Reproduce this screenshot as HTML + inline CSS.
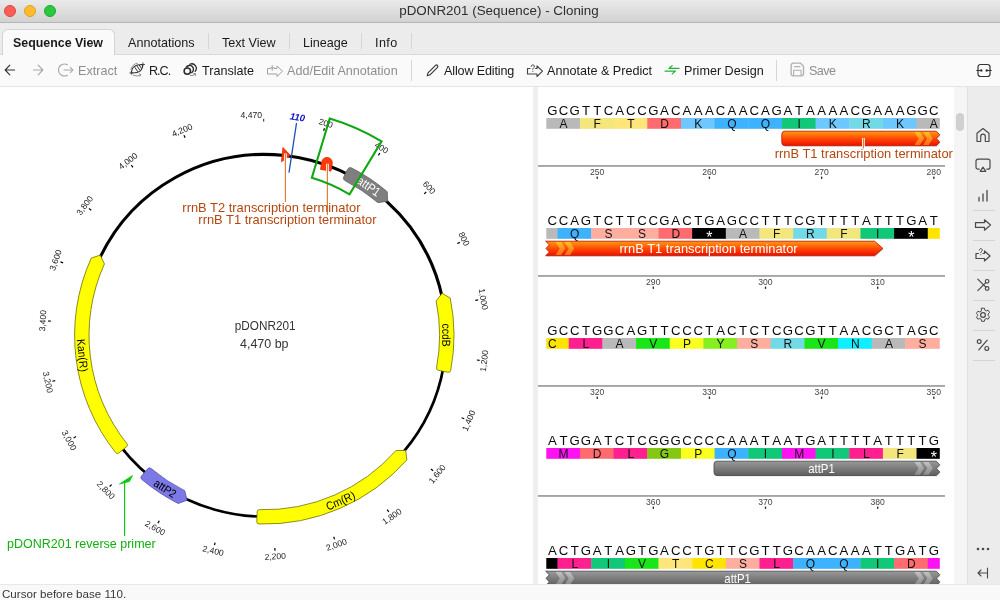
<!DOCTYPE html>
<html lang="en"><head><meta charset="utf-8"><title>pDONR201 (Sequence) - Cloning</title>
<style>
html,body{margin:0;padding:0}
body{width:1000px;height:600px;overflow:hidden;background:#fff;position:relative;-webkit-font-smoothing:antialiased;font-family:"Liberation Sans",sans-serif;font-size:12.6px;color:#111}
.abs{position:absolute}

#titlebar{left:0;top:0;width:1000px;height:22px;background:linear-gradient(#eaeaea,#d2d2d2);border-bottom:1px solid #b4b4b4}
#titlebar .t{position:absolute;left:0;width:1000px;top:3px;text-align:center;font-size:13.4px;color:#2e2e2e;left:-1px}
.tl{position:absolute;top:5px;width:12px;height:12px;border-radius:50%;box-sizing:border-box}
#tabbar{left:0;top:23px;width:1000px;height:32px;background:#ececec}
#tabbar .tab{position:absolute;top:13px;font-size:12.6px;white-space:nowrap;color:#1a1a1a}
#tabbar .sep{position:absolute;top:10px;width:1px;height:16px;background:#d6d6d6}
#acttab{position:absolute;left:2px;top:6px;width:113px;height:27px;background:#fafafa;border:1px solid #d4d4d4;border-bottom:none;border-radius:6px 6px 0 0;box-sizing:border-box}
#toolbar{left:0;top:55px;width:1000px;height:31px;background:#fafafa;border-bottom:1px solid #e5e5e5}
#toolbar .b{position:absolute;top:9px;font-size:12.6px;white-space:nowrap;color:#1a1a1a}
#toolbar .g{color:#8e8e8e}
#toolbar .sep{position:absolute;top:5px;width:1px;height:21px;background:#d6d6d6}
#toolbar svg{position:absolute;overflow:visible}
#status{left:0;top:584px;width:1000px;height:16px;background:#f9f9f9;border-top:1px solid #e8e8e8;box-sizing:border-box}
#status span{position:absolute;left:2px;top:1.6px;font-size:11.6px;color:#383838;white-space:nowrap}


#divider{left:533px;top:87px;width:5px;height:497px;background:#efefef}
#scroll{left:954px;top:87px;width:13px;height:497px;background:#f5f5f5}
#thumb{left:956px;top:113px;width:8px;height:17.5px;border-radius:4px;background:#d0d0d0}


#side{left:967px;top:87px;width:33px;height:497px;background:#ececec;border-left:1px solid #e0e0e0;box-sizing:border-box}
#side svg{position:absolute;left:5px;overflow:visible}
#side .sp{position:absolute;left:5px;width:22px;height:1px;background:#d4d4d4}

</style></head><body>
<div id="all" style="position:absolute;left:0;top:0;width:1000px;height:600px;will-change:transform">

<div class="abs" id="titlebar">
 <div class="tl" style="left:4px;background:#fc5f57;border:0.5px solid #e0443e"></div>
 <div class="tl" style="left:24px;background:#fdbc2e;border:0.5px solid #dea123"></div>
 <div class="tl" style="left:44px;background:#28c840;border:0.5px solid #1aab29"></div>
 <div class="t">pDONR201 (Sequence) - Cloning</div>
</div>
<div class="abs" id="tabbar">
 <div style="position:absolute;left:0;top:31px;width:1000px;height:1px;background:#d9d9d9"></div>
 <div id="acttab"></div>
 <div class="tab" style="left:13px;font-weight:bold;font-size:12.4px">Sequence View</div>
 <div class="tab" style="left:128px">Annotations</div>
 <div class="sep" style="left:208px"></div>
 <div class="tab" style="left:222px">Text View</div>
 <div class="sep" style="left:289px"></div>
 <div class="tab" style="left:303px">Lineage</div>
 <div class="sep" style="left:361px"></div>
 <div class="tab" style="left:375px;letter-spacing:0.4px">Info</div>
 <div class="sep" style="left:411px"></div>
</div>
<div class="abs" id="toolbar">
 <svg style="left:3px;top:8px" width="14" height="14" viewBox="0 0 14 14" fill="none" stroke="#333" stroke-width="1.15" stroke-linecap="round" stroke-linejoin="round"><path d="M11.6 7H2.4M6.8 2.2L2.2 7L6.8 11.8"/></svg>
 <svg style="left:30.5px;top:8px" width="14" height="14" viewBox="0 0 14 14" fill="none" stroke="#a8a8a8" stroke-width="1.15" stroke-linecap="round" stroke-linejoin="round"><path d="M2.4 7H11.6M7.2 2.2L11.8 7L7.2 11.8"/></svg>
 <svg style="left:58px;top:7px" width="16" height="16" viewBox="0 0 16 16" fill="none" stroke="#a8a8a8" stroke-width="1.05" stroke-linecap="round" stroke-linejoin="round"><path d="M9.5 2.8A6 6 0 1 0 9.5 13.2M6 8H15M12.3 5.3L15 8L12.3 10.7"/></svg>
 <div class="b g" style="left:78px">Extract</div>
 <svg style="left:130px;top:62px;top:7px" width="16" height="16" viewBox="0 0 16 16" fill="none" stroke="#333" stroke-width="1.05" stroke-linecap="round" stroke-linejoin="round"><path d="M1.6 10.9Q1.2 2.4 12.6 2.6Q13 11.4 1.6 10.9Z"/><path d="M5 5.6L7.6 9.4M7.2 4.3L9.8 8.1M9.4 3.4L11.4 6.3" stroke-width="1"/><path d="M12.9 0.8V4.2M11.2 2.5H14.6M1.3 9.4V12.4M-0.2 10.9H2.8" stroke-width="0.8"/><path d="M0.9 7.6A7 7 0 0 1 7.4 1.3M3.4 13.4A7.5 7.5 0 0 0 10.6 12.9M9.4 11.6L10.9 12.8L9.8 14.3" stroke="#8a8a8a" stroke-width="0.9"/></svg>
 <div class="b" style="left:149px;letter-spacing:-1px">R.C.</div>
 <svg style="left:181px;top:7px" width="17" height="17" viewBox="0 0 17 17" fill="none" stroke="#2a2a2a" stroke-width="1.5" stroke-linecap="round" stroke-linejoin="round"><circle cx="6.3" cy="9.1" r="3.2"/><path d="M5.3 5.2A3.9 3.9 0 1 1 10.7 10.6" stroke-width="1.35"/><path d="M8.85 2.3A4.5 4.5 0 0 1 14.1 9.4" stroke-width="1.25"/><path d="M9.6 13.6Q12.6 14.2 14.2 11.9M12.6 11.7L14.4 11.6L14.5 13.4" stroke="#7a7a7a" stroke-width="0.9"/></svg>
 <div class="b" style="left:202px">Translate</div>
 <svg style="left:266px;top:9px" width="18" height="14" viewBox="0 0 18 14" fill="none" stroke="#a0a0a0" stroke-width="1" stroke-linecap="round" stroke-linejoin="round"><path d="M4 4.5H1.5V10H11V12.5L16.5 7.2L11 2V4.5H8.5M6.2 1.5V6.5M4 4H8.5"/></svg>
 <div class="b g" style="left:287px">Add/Edit Annotation</div>
 <div class="sep" style="left:411px"></div>
 <svg style="left:425px;top:8px" width="15" height="15" viewBox="0 0 15 15" fill="none" stroke="#333" stroke-width="1.1" stroke-linecap="round" stroke-linejoin="round"><path d="M2.2 12.8L3 9.8L10.5 2.3a1.3 1.3 0 0 1 2 2L5 11.8Z"/></svg>
 <div class="b" style="left:444px;letter-spacing:-0.15px">Allow Editing</div>
 <svg style="left:526px;top:8px" width="18" height="15" viewBox="0 0 18 15" fill="none" stroke="#444" stroke-width="1.1" stroke-linecap="round" stroke-linejoin="round"><path d="M4 5.5H1.5V11H11V13.5L16.5 8.2L11 3V5.5H9.5"/><path d="M5.2 3.4a1.6 1.6 0 1 1 2.3 1.5c-.5.3-.7.6-.7 1.3M6.8 8.2v.2" stroke-width="1"/></svg>
 <div class="b" style="left:547px">Annotate &amp; Predict</div>
 <svg style="left:664px;top:9px" width="16" height="12" viewBox="0 0 16 12" fill="none" stroke="#22b036" stroke-width="1.25" stroke-linecap="round" stroke-linejoin="round"><path d="M15 4.4H5L8.2 1.6M1 7.1H11.4L8.2 9.9"/></svg>
 <div class="b" style="left:684px">Primer Design</div>
 <div class="sep" style="left:776px"></div>
 <svg style="left:790px;top:7px" width="15" height="15" viewBox="0 0 15 15" fill="none" stroke="#b0b0b0" stroke-width="1.35" stroke-linecap="round" stroke-linejoin="round"><path d="M3.3 1.1H10.3L13.5 4.2V11.6a2.2 2.2 0 0 1-2.2 2.2H3.3a2.2 2.2 0 0 1-2.2-2.2V3.3a2.2 2.2 0 0 1 2.2-2.2Z"/><path d="M4.6 4.6H10M3.6 13.4V8.3H11V13.4" stroke-width="1.1"/></svg>
 <div class="b g" style="left:809px;letter-spacing:-0.6px">Save</div>
 <svg style="left:976px;top:8px" width="16" height="15" viewBox="0 0 16 15" fill="none" stroke="#333" stroke-width="1.2" stroke-linecap="round" stroke-linejoin="round"><rect x="2" y="1.5" width="12" height="12" rx="2.5"/><path d="M0.8 7.5H5M11 7.5H15.2" /><circle cx="5.3" cy="7.5" r="0.6" fill="#333"/><circle cx="10.7" cy="7.5" r="0.6" fill="#333"/></svg>
</div>
<div class="abs" id="status"><span>Cursor before base 110.</span></div>

<div class="abs" id="mapwrap" style="left:0;top:87px;width:533px;height:497px;overflow:hidden">
<svg width="533" height="497" viewBox="0 87 533 497" style="position:absolute;left:0;top:0;font-family:'Liberation Sans',sans-serif">
<path d="M124.88 451.74A182 181 0 0 1 100.72 256.06" fill="none" stroke="#000" stroke-width="2.6"/>
<path d="M443.54 366.83A182 181 0 0 1 326.55 505.48" fill="none" stroke="#000" stroke-width="2.7"/>
<path d="M326.55 505.48A182 181 0 0 1 120.88 446.83" fill="none" stroke="#000" stroke-width="2.6"/>
<path d="M99.35 258.91A182 181 0 0 1 442.32 297.77" fill="none" stroke="#000" stroke-width="3.1"/>
<path d="M323.67 130.93L324.45 128.26" stroke="#000" stroke-width="1.2"/>
<text x="325.92" y="123.19" font-size="8.6" fill="#1c1c1c" text-anchor="middle" dominant-baseline="central" transform="rotate(16.11 325.92 123.19)">200</text>
<path d="M378.38 155.34L379.87 152.98" stroke="#000" stroke-width="1.2"/>
<text x="381.55" y="147.81" font-size="8.6" fill="#1c1c1c" text-anchor="middle" dominant-baseline="central" transform="rotate(32.21 381.55 147.81)">400</text>
<path d="M424.14 193.89L426.23 192.03" stroke="#000" stroke-width="1.2"/>
<text x="429.28" y="187.52" font-size="8.6" fill="#1c1c1c" text-anchor="middle" dominant-baseline="central" transform="rotate(48.32 429.28 187.52)">600</text>
<path d="M457.34 243.54L459.87 242.34" stroke="#000" stroke-width="1.2"/>
<text x="464.06" y="238.85" font-size="8.6" fill="#1c1c1c" text-anchor="middle" dominant-baseline="central" transform="rotate(64.43 464.06 238.85)">800</text>
<path d="M475.39 300.41L478.15 299.95" stroke="#000" stroke-width="1.2"/>
<text x="483.38" y="299.08" font-size="8.6" fill="#1c1c1c" text-anchor="middle" dominant-baseline="central" transform="rotate(80.54 483.38 299.08)">1,000</text>
<path d="M476.86 360.02L479.64 360.35" stroke="#000" stroke-width="1.2"/>
<text x="484.08" y="360.86" font-size="8.6" fill="#1c1c1c" text-anchor="middle" dominant-baseline="central" transform="rotate(-83.36 484.08 360.86)">1,200</text>
<path d="M461.65 417.71L464.23 418.78" stroke="#000" stroke-width="1.2"/>
<text x="468.7" y="420.65" font-size="8.6" fill="#1c1c1c" text-anchor="middle" dominant-baseline="central" transform="rotate(-67.25 468.7 420.65)">1,400</text>
<path d="M430.94 468.93L433.12 470.67" stroke="#000" stroke-width="1.2"/>
<text x="437.15" y="473.9" font-size="8.6" fill="#1c1c1c" text-anchor="middle" dominant-baseline="central" transform="rotate(-51.14 437.15 473.9)">1,600</text>
<path d="M387.15 509.66L388.76 511.94" stroke="#000" stroke-width="1.2"/>
<text x="391.88" y="516.38" font-size="8.6" fill="#1c1c1c" text-anchor="middle" dominant-baseline="central" transform="rotate(-35.03 391.88 516.38)">1,800</text>
<path d="M333.71 536.72L334.62 539.35" stroke="#000" stroke-width="1.2"/>
<text x="336.44" y="544.64" font-size="8.6" fill="#1c1c1c" text-anchor="middle" dominant-baseline="central" transform="rotate(-18.93 336.44 544.64)">2,000</text>
<path d="M274.82 547.97L274.96 550.75" stroke="#000" stroke-width="1.2"/>
<text x="275.24" y="556.41" font-size="8.6" fill="#1c1c1c" text-anchor="middle" dominant-baseline="central" transform="rotate(-2.82 275.24 556.41)">2,200</text>
<path d="M215.11 542.52L214.47 545.23" stroke="#000" stroke-width="1.2"/>
<text x="213.17" y="550.72" font-size="8.6" fill="#1c1c1c" text-anchor="middle" dominant-baseline="central" transform="rotate(13.29 213.17 550.72)">2,400</text>
<path d="M159.26 520.82L157.89 523.25" stroke="#000" stroke-width="1.2"/>
<text x="155.18" y="528.03" font-size="8.6" fill="#1c1c1c" text-anchor="middle" dominant-baseline="central" transform="rotate(29.4 155.18 528.03)">2,600</text>
<path d="M111.66 484.56L109.66 486.51" stroke="#000" stroke-width="1.2"/>
<text x="105.89" y="490.19" font-size="8.6" fill="#1c1c1c" text-anchor="middle" dominant-baseline="central" transform="rotate(45.5 105.89 490.19)">2,800</text>
<path d="M76.04 436.59L73.57 437.91" stroke="#000" stroke-width="1.2"/>
<text x="69.2" y="440.26" font-size="8.6" fill="#1c1c1c" text-anchor="middle" dominant-baseline="central" transform="rotate(61.61 69.2 440.26)">3,000</text>
<path d="M55.2 380.67L52.46 381.26" stroke="#000" stroke-width="1.2"/>
<text x="47.97" y="382.24" font-size="8.6" fill="#1c1c1c" text-anchor="middle" dominant-baseline="central" transform="rotate(77.72 47.97 382.24)">3,200</text>
<path d="M50.78 321.2L47.98 321.02" stroke="#000" stroke-width="1.2"/>
<text x="42.69" y="320.66" font-size="8.6" fill="#1c1c1c" text-anchor="middle" dominant-baseline="central" transform="rotate(273.83 42.69 320.66)">3,400</text>
<path d="M63.12 262.84L60.49 261.9" stroke="#000" stroke-width="1.2"/>
<text x="55.51" y="260.1" font-size="8.6" fill="#1c1c1c" text-anchor="middle" dominant-baseline="central" transform="rotate(289.93 55.51 260.1)">3,600</text>
<path d="M91.26 210.18L88.99 208.55" stroke="#000" stroke-width="1.2"/>
<text x="84.71" y="205.45" font-size="8.6" fill="#1c1c1c" text-anchor="middle" dominant-baseline="central" transform="rotate(306.04 84.71 205.45)">3,800</text>
<path d="M132.98 167.36L131.27 165.16" stroke="#000" stroke-width="1.2"/>
<text x="128.01" y="161" font-size="8.6" fill="#1c1c1c" text-anchor="middle" dominant-baseline="central" transform="rotate(322.15 128.01 161)">4,000</text>
<path d="M185.02 137.72L183.98 135.13" stroke="#000" stroke-width="1.2"/>
<text x="182.02" y="130.24" font-size="8.6" fill="#1c1c1c" text-anchor="middle" dominant-baseline="central" transform="rotate(338.26 182.02 130.24)">4,200</text>
<path d="M263.7 118.8V121.6" stroke="#222" stroke-width="1"/>
<text x="262" y="117.8" font-size="8.6" fill="#1c1c1c" text-anchor="end">4,470</text>
<path d="M118.79 453Q117.08 454.38 115.65 452.6A189.7 188.66 0 0 1 91.27 258.07L100.28 255.14L104.41 263.94A175.3 174.34 0 0 0 126.93 443.71Q128.26 445.35 126.55 446.73Z" fill="#ffff00" stroke="#6e6e00" stroke-width="0.8" stroke-linejoin="round"/>
<path d="M141.49 475.9Q139.85 477.78 141.82 479.47A189.7 188.66 0 0 0 178.18 503.49L187.05 500.16L184.72 490.73A175.3 174.34 0 0 1 151.12 468.53Q149.29 466.97 147.65 468.85Z" fill="#7c78e6" stroke="#5450b0" stroke-width="0.8" stroke-linejoin="round"/>
<path d="M256.78 521.72Q256.69 523.9 258.98 523.98A189.7 188.66 0 0 0 406.81 459.91L405.76 450.55L396 450.46A175.3 174.34 0 0 1 259.38 509.67Q257.26 509.6 257.18 511.78Z" fill="#ffff00" stroke="#6e6e00" stroke-width="0.8" stroke-linejoin="round"/>
<path d="M448.1 372.26Q450.26 372.69 450.7 370.45A189.7 188.66 0 0 0 450.26 298.11L442.12 293.27L436.14 300.94A175.3 174.34 0 0 1 436.55 367.79Q436.14 369.86 438.3 370.29Z" fill="#ffff00" stroke="#6e6e00" stroke-width="0.8" stroke-linejoin="round"/>
<path d="M347.61 169.23Q348.94 166.56 351.73 167.98A189.7 188.66 0 0 1 387.25 191.73L387.56 201.15L377.92 202.64A175.3 174.34 0 0 0 345.09 180.68Q342.52 179.38 343.86 176.71Z" fill="#7f7f7f" stroke="#5e5e5e" stroke-width="0.8" stroke-linejoin="round"/>
<text x="82.9" y="355.32" font-size="11.6" fill="#000" text-anchor="middle" dominant-baseline="central" textLength="32.94" lengthAdjust="spacingAndGlyphs" transform="rotate(83.7 82.9 355.32)">Kan(R)</text>
<text x="165.44" y="487.96" font-size="11.6" fill="#000" text-anchor="middle" dominant-baseline="central" textLength="24.28" lengthAdjust="spacingAndGlyphs" transform="rotate(32.8 165.44 487.96)">attP2</text>
<text x="340.27" y="500.42" font-size="11.6" fill="#000" text-anchor="middle" dominant-baseline="central" textLength="30.61" lengthAdjust="spacingAndGlyphs" transform="rotate(-24.6 340.27 500.42)">Cm(R)</text>
<text x="446.8" y="335.08" font-size="11.6" fill="#000" text-anchor="middle" dominant-baseline="central" textLength="23.12" lengthAdjust="spacingAndGlyphs" transform="rotate(89.9 446.8 335.08)">ccdB</text>
<text x="368.72" y="186.55" font-size="12.4" fill="#fff" text-anchor="middle" dominant-baseline="central" textLength="25.22" lengthAdjust="spacingAndGlyphs" transform="rotate(34.9 368.72 186.55)">attP1</text>
<path d="M282.96 147.46L290.29 155.35L281.48 161.8Z" fill="#ff3a0a" stroke="#e02808" stroke-width="0.8" stroke-linejoin="round"/>
<path d="M285.4 153.6V202" stroke="#fff" stroke-width="2.8"/>
<path d="M285.4 153.9V202" stroke="#e47a30" stroke-width="1.15"/>
<path d="M321.4 170.3V162.7a5.3 5.3 0 0 1 10.6 0V170.3Z" fill="#ff3a0a" stroke="#e02808" stroke-width="0.8" stroke-linejoin="round" transform="rotate(9 326.6 164.5)"/>
<path d="M327.4 163.8V215" stroke="#fff" stroke-width="2.8"/>
<path d="M327.4 164.1V215" stroke="#e47a30" stroke-width="1.15"/>
<text x="360.5" y="212.2" font-size="12.9" fill="#b5460f" text-anchor="end">rrnB T2 transcription terminator</text>
<text x="376.5" y="224.3" font-size="12.9" fill="#b5460f" text-anchor="end">rrnB T1 transcription terminator</text>
<path d="M288.99 172.65L296.53 122.99" stroke="#1a4fb8" stroke-width="1.3"/>
<text x="296.91" y="120.44" font-size="9.5" font-weight="bold" font-style="italic" fill="#1010c8" text-anchor="middle" transform="rotate(8.58 296.91 120.44)">110</text>
<path d="M329.73 118.5A227.7 226.45 0 0 1 381.57 141.3L349.54 194.32A165.5 164.59 0 0 0 311.86 177.75Z" fill="none" stroke="#10a812" stroke-width="2.1" stroke-linejoin="miter"/>
<path d="M119.5 484L132.5 475.5L129.5 481.5Z" fill="#10c810" stroke="#10c810" stroke-width="0.8" stroke-linejoin="round"/>
<path d="M124.6 482V536" stroke="#10c810" stroke-width="1.2"/>
<text x="7" y="548.3" font-size="12.5" fill="#10b010">pDONR201 reverse primer</text>
<text x="265.2" y="329.5" font-size="12.6" fill="#333" text-anchor="middle" textLength="60.8" lengthAdjust="spacingAndGlyphs">pDONR201</text>
<text x="264.3" y="347.5" font-size="12.6" fill="#333" text-anchor="middle" textLength="48.5" lengthAdjust="spacingAndGlyphs">4,470 bp</text>
</svg>
</div>
<div class="abs" id="divider"></div>
<svg width="415" height="497" viewBox="538 87 415 497" style="position:absolute;left:538px;top:87px;font-family:'Liberation Sans',sans-serif">
<defs>
<linearGradient id="gr" x1="0" y1="0" x2="0" y2="1"><stop offset="0" stop-color="#ff8f12"/><stop offset="0.12" stop-color="#ff8a10"/><stop offset="0.5" stop-color="#ff4a04"/><stop offset="0.9" stop-color="#f21a00"/><stop offset="1" stop-color="#e01400"/></linearGradient>
<linearGradient id="gg" x1="0" y1="0" x2="0" y2="1"><stop offset="0" stop-color="#9a9a9a"/><stop offset="0.5" stop-color="#7c7c7c"/><stop offset="1" stop-color="#5e5e5e"/></linearGradient>
<linearGradient id="cr" x1="0" y1="0" x2="0" y2="1"><stop offset="0" stop-color="#ffc420"/><stop offset="0.5" stop-color="#ff921c"/><stop offset="1" stop-color="#ff6a18"/></linearGradient>
<linearGradient id="cg" x1="0" y1="0" x2="0" y2="1"><stop offset="0" stop-color="#c4c4c4"/><stop offset="0.5" stop-color="#a4a4a4"/><stop offset="1" stop-color="#8a8a8a"/></linearGradient>
</defs>
<text y="115.2" x="552.3 563.52 574.74 585.96 597.18 608.4 619.62 630.84 642.06 653.28 664.5 675.72 686.94 698.16 709.38 720.6 731.82 743.04 754.26 765.48 776.7 787.92 799.14 810.36 821.58 832.8 844.02 855.24 866.46 877.68 888.9 900.12 911.34 922.56 933.78" font-size="13.2" fill="#0a0a0a" text-anchor="middle">GCGTTCACCGACAAACAACAGATAAAACGAAAGGC</text>
<rect x="546.29" y="118" width="34.06" height="10.8" fill="#b9b9b9"/>
<text x="563.52" y="127.6" font-size="12" fill="#111" text-anchor="middle">A</text>
<rect x="579.95" y="118" width="34.06" height="10.8" fill="#f2e67c"/>
<text x="597.18" y="127.6" font-size="12" fill="#111" text-anchor="middle">F</text>
<rect x="613.61" y="118" width="34.06" height="10.8" fill="#ffe67a"/>
<text x="630.84" y="127.6" font-size="12" fill="#111" text-anchor="middle">T</text>
<rect x="647.27" y="118" width="34.06" height="10.8" fill="#ff6b6e"/>
<text x="664.5" y="127.6" font-size="12" fill="#111" text-anchor="middle">D</text>
<rect x="680.93" y="118" width="34.06" height="10.8" fill="#6ec7ff"/>
<text x="698.16" y="127.6" font-size="12" fill="#111" text-anchor="middle">K</text>
<rect x="714.59" y="118" width="34.06" height="10.8" fill="#3db2ff"/>
<text x="731.82" y="127.6" font-size="12" fill="#111" text-anchor="middle">Q</text>
<rect x="748.25" y="118" width="34.06" height="10.8" fill="#3db2ff"/>
<text x="765.48" y="127.6" font-size="12" fill="#111" text-anchor="middle">Q</text>
<rect x="781.91" y="118" width="34.06" height="10.8" fill="#10c878"/>
<text x="799.14" y="127.6" font-size="12" fill="#111" text-anchor="middle">I</text>
<rect x="815.57" y="118" width="34.06" height="10.8" fill="#6ec7ff"/>
<text x="832.8" y="127.6" font-size="12" fill="#111" text-anchor="middle">K</text>
<rect x="849.23" y="118" width="34.06" height="10.8" fill="#72dae6"/>
<text x="866.46" y="127.6" font-size="12" fill="#111" text-anchor="middle">R</text>
<rect x="882.89" y="118" width="34.06" height="10.8" fill="#6ec7ff"/>
<text x="900.12" y="127.6" font-size="12" fill="#111" text-anchor="middle">K</text>
<rect x="916.55" y="118" width="23.24" height="10.8" fill="#b9b9b9"/>
<text x="933.78" y="127.6" font-size="12" fill="#111" text-anchor="middle">A</text>
<rect x="538" y="165.2" width="407" height="1.5" fill="#8e8e8e"/>
<text x="597.18" y="175" font-size="8.6" fill="#444" text-anchor="middle">250</text>
<rect x="596.58" y="176.6" width="1.3" height="2.3" fill="#222"/>
<text x="709.38" y="175" font-size="8.6" fill="#444" text-anchor="middle">260</text>
<rect x="708.78" y="176.6" width="1.3" height="2.3" fill="#222"/>
<text x="821.58" y="175" font-size="8.6" fill="#444" text-anchor="middle">270</text>
<rect x="820.98" y="176.6" width="1.3" height="2.3" fill="#222"/>
<text x="933.78" y="175" font-size="8.6" fill="#444" text-anchor="middle">280</text>
<rect x="933.18" y="176.6" width="1.3" height="2.3" fill="#222"/>
<text y="225.2" x="552.3 563.52 574.74 585.96 597.18 608.4 619.62 630.84 642.06 653.28 664.5 675.72 686.94 698.16 709.38 720.6 731.82 743.04 754.26 765.48 776.7 787.92 799.14 810.36 821.58 832.8 844.02 855.24 866.46 877.68 888.9 900.12 911.34 922.56 933.78" font-size="13.2" fill="#0a0a0a" text-anchor="middle">CCAGTCTTCCGACTGAGCCTTTCGTTTTATTTGAT</text>
<rect x="546.29" y="228" width="11.62" height="10.8" fill="#b9b9b9"/>
<rect x="557.51" y="228" width="34.06" height="10.8" fill="#3db2ff"/>
<text x="574.74" y="237.6" font-size="12" fill="#111" text-anchor="middle">Q</text>
<rect x="591.17" y="228" width="34.06" height="10.8" fill="#ffad9f"/>
<text x="608.4" y="237.6" font-size="12" fill="#111" text-anchor="middle">S</text>
<rect x="624.83" y="228" width="34.06" height="10.8" fill="#ffad9f"/>
<text x="642.06" y="237.6" font-size="12" fill="#111" text-anchor="middle">S</text>
<rect x="658.49" y="228" width="34.06" height="10.8" fill="#ff6b6e"/>
<text x="675.72" y="237.6" font-size="12" fill="#111" text-anchor="middle">D</text>
<rect x="692.15" y="228" width="34.06" height="10.8" fill="#000000"/>
<text x="709.38" y="243.3" font-size="16" fill="#fff" text-anchor="middle">*</text>
<rect x="725.81" y="228" width="34.06" height="10.8" fill="#b9b9b9"/>
<text x="743.04" y="237.6" font-size="12" fill="#111" text-anchor="middle">A</text>
<rect x="759.47" y="228" width="34.06" height="10.8" fill="#f2e67c"/>
<text x="776.7" y="237.6" font-size="12" fill="#111" text-anchor="middle">F</text>
<rect x="793.13" y="228" width="34.06" height="10.8" fill="#72dae6"/>
<text x="810.36" y="237.6" font-size="12" fill="#111" text-anchor="middle">R</text>
<rect x="826.79" y="228" width="34.06" height="10.8" fill="#f2e67c"/>
<text x="844.02" y="237.6" font-size="12" fill="#111" text-anchor="middle">F</text>
<rect x="860.45" y="228" width="34.06" height="10.8" fill="#10c878"/>
<text x="877.68" y="237.6" font-size="12" fill="#111" text-anchor="middle">I</text>
<rect x="894.11" y="228" width="34.06" height="10.8" fill="#000000"/>
<text x="911.34" y="243.3" font-size="16" fill="#fff" text-anchor="middle">*</text>
<rect x="927.77" y="228" width="12.02" height="10.8" fill="#ffe400"/>
<rect x="538" y="275.2" width="407" height="1.5" fill="#8e8e8e"/>
<text x="653.28" y="285" font-size="8.6" fill="#444" text-anchor="middle">290</text>
<rect x="652.68" y="286.6" width="1.3" height="2.3" fill="#222"/>
<text x="765.48" y="285" font-size="8.6" fill="#444" text-anchor="middle">300</text>
<rect x="764.88" y="286.6" width="1.3" height="2.3" fill="#222"/>
<text x="877.68" y="285" font-size="8.6" fill="#444" text-anchor="middle">310</text>
<rect x="877.08" y="286.6" width="1.3" height="2.3" fill="#222"/>
<text y="335.2" x="552.3 563.52 574.74 585.96 597.18 608.4 619.62 630.84 642.06 653.28 664.5 675.72 686.94 698.16 709.38 720.6 731.82 743.04 754.26 765.48 776.7 787.92 799.14 810.36 821.58 832.8 844.02 855.24 866.46 877.68 888.9 900.12 911.34 922.56 933.78" font-size="13.2" fill="#0a0a0a" text-anchor="middle">GCCTGGCAGTTCCCTACTCTCGCGTTAACGCTAGC</text>
<rect x="546.29" y="338" width="22.84" height="10.8" fill="#ffe400"/>
<text x="552.3" y="347.6" font-size="12" fill="#111" text-anchor="middle">C</text>
<rect x="568.73" y="338" width="34.06" height="10.8" fill="#ff1f8f"/>
<text x="585.96" y="347.6" font-size="12" fill="#111" text-anchor="middle">L</text>
<rect x="602.39" y="338" width="34.06" height="10.8" fill="#b9b9b9"/>
<text x="619.62" y="347.6" font-size="12" fill="#111" text-anchor="middle">A</text>
<rect x="636.05" y="338" width="34.06" height="10.8" fill="#19e619"/>
<text x="653.28" y="347.6" font-size="12" fill="#111" text-anchor="middle">V</text>
<rect x="669.71" y="338" width="34.06" height="10.8" fill="#f9ff21"/>
<text x="686.94" y="347.6" font-size="12" fill="#111" text-anchor="middle">P</text>
<rect x="703.37" y="338" width="34.06" height="10.8" fill="#86f01f"/>
<text x="720.6" y="347.6" font-size="12" fill="#111" text-anchor="middle">Y</text>
<rect x="737.03" y="338" width="34.06" height="10.8" fill="#ffad9f"/>
<text x="754.26" y="347.6" font-size="12" fill="#111" text-anchor="middle">S</text>
<rect x="770.69" y="338" width="34.06" height="10.8" fill="#72dae6"/>
<text x="787.92" y="347.6" font-size="12" fill="#111" text-anchor="middle">R</text>
<rect x="804.35" y="338" width="34.06" height="10.8" fill="#19e619"/>
<text x="821.58" y="347.6" font-size="12" fill="#111" text-anchor="middle">V</text>
<rect x="838.01" y="338" width="34.06" height="10.8" fill="#0fefff"/>
<text x="855.24" y="347.6" font-size="12" fill="#111" text-anchor="middle">N</text>
<rect x="871.67" y="338" width="34.06" height="10.8" fill="#b9b9b9"/>
<text x="888.9" y="347.6" font-size="12" fill="#111" text-anchor="middle">A</text>
<rect x="905.33" y="338" width="34.46" height="10.8" fill="#ffad9f"/>
<text x="922.56" y="347.6" font-size="12" fill="#111" text-anchor="middle">S</text>
<rect x="538" y="385.2" width="407" height="1.5" fill="#8e8e8e"/>
<text x="597.18" y="395" font-size="8.6" fill="#444" text-anchor="middle">320</text>
<rect x="596.58" y="396.6" width="1.3" height="2.3" fill="#222"/>
<text x="709.38" y="395" font-size="8.6" fill="#444" text-anchor="middle">330</text>
<rect x="708.78" y="396.6" width="1.3" height="2.3" fill="#222"/>
<text x="821.58" y="395" font-size="8.6" fill="#444" text-anchor="middle">340</text>
<rect x="820.98" y="396.6" width="1.3" height="2.3" fill="#222"/>
<text x="933.78" y="395" font-size="8.6" fill="#444" text-anchor="middle">350</text>
<rect x="933.18" y="396.6" width="1.3" height="2.3" fill="#222"/>
<text y="445.2" x="552.3 563.52 574.74 585.96 597.18 608.4 619.62 630.84 642.06 653.28 664.5 675.72 686.94 698.16 709.38 720.6 731.82 743.04 754.26 765.48 776.7 787.92 799.14 810.36 821.58 832.8 844.02 855.24 866.46 877.68 888.9 900.12 911.34 922.56 933.78" font-size="13.2" fill="#0a0a0a" text-anchor="middle">ATGGATCTCGGGCCCCAAATAATGATTTTATTTTG</text>
<rect x="546.29" y="448" width="34.06" height="10.8" fill="#ff12f2"/>
<text x="563.52" y="457.6" font-size="12" fill="#111" text-anchor="middle">M</text>
<rect x="579.95" y="448" width="34.06" height="10.8" fill="#ff6b6e"/>
<text x="597.18" y="457.6" font-size="12" fill="#111" text-anchor="middle">D</text>
<rect x="613.61" y="448" width="34.06" height="10.8" fill="#ff1f8f"/>
<text x="630.84" y="457.6" font-size="12" fill="#111" text-anchor="middle">L</text>
<rect x="647.27" y="448" width="34.06" height="10.8" fill="#85c814"/>
<text x="664.5" y="457.6" font-size="12" fill="#111" text-anchor="middle">G</text>
<rect x="680.93" y="448" width="34.06" height="10.8" fill="#f9ff21"/>
<text x="698.16" y="457.6" font-size="12" fill="#111" text-anchor="middle">P</text>
<rect x="714.59" y="448" width="34.06" height="10.8" fill="#3db2ff"/>
<text x="731.82" y="457.6" font-size="12" fill="#111" text-anchor="middle">Q</text>
<rect x="748.25" y="448" width="34.06" height="10.8" fill="#10c878"/>
<text x="765.48" y="457.6" font-size="12" fill="#111" text-anchor="middle">I</text>
<rect x="781.91" y="448" width="34.06" height="10.8" fill="#ff12f2"/>
<text x="799.14" y="457.6" font-size="12" fill="#111" text-anchor="middle">M</text>
<rect x="815.57" y="448" width="34.06" height="10.8" fill="#10c878"/>
<text x="832.8" y="457.6" font-size="12" fill="#111" text-anchor="middle">I</text>
<rect x="849.23" y="448" width="34.06" height="10.8" fill="#ff1f8f"/>
<text x="866.46" y="457.6" font-size="12" fill="#111" text-anchor="middle">L</text>
<rect x="882.89" y="448" width="34.06" height="10.8" fill="#f2e67c"/>
<text x="900.12" y="457.6" font-size="12" fill="#111" text-anchor="middle">F</text>
<rect x="916.55" y="448" width="23.24" height="10.8" fill="#000000"/>
<text x="933.78" y="463.3" font-size="16" fill="#fff" text-anchor="middle">*</text>
<rect x="538" y="495.2" width="407" height="1.5" fill="#8e8e8e"/>
<text x="653.28" y="505" font-size="8.6" fill="#444" text-anchor="middle">360</text>
<rect x="652.68" y="506.6" width="1.3" height="2.3" fill="#222"/>
<text x="765.48" y="505" font-size="8.6" fill="#444" text-anchor="middle">370</text>
<rect x="764.88" y="506.6" width="1.3" height="2.3" fill="#222"/>
<text x="877.68" y="505" font-size="8.6" fill="#444" text-anchor="middle">380</text>
<rect x="877.08" y="506.6" width="1.3" height="2.3" fill="#222"/>
<text y="555.2" x="552.3 563.52 574.74 585.96 597.18 608.4 619.62 630.84 642.06 653.28 664.5 675.72 686.94 698.16 709.38 720.6 731.82 743.04 754.26 765.48 776.7 787.92 799.14 810.36 821.58 832.8 844.02 855.24 866.46 877.68 888.9 900.12 911.34 922.56 933.78" font-size="13.2" fill="#0a0a0a" text-anchor="middle">ACTGATAGTGACCTGTTCGTTGCAACAAATTGATG</text>
<rect x="546.29" y="558" width="11.62" height="10.8" fill="#000000"/>
<rect x="557.51" y="558" width="34.06" height="10.8" fill="#ff1f8f"/>
<text x="574.74" y="567.6" font-size="12" fill="#111" text-anchor="middle">L</text>
<rect x="591.17" y="558" width="34.06" height="10.8" fill="#10c878"/>
<text x="608.4" y="567.6" font-size="12" fill="#111" text-anchor="middle">I</text>
<rect x="624.83" y="558" width="34.06" height="10.8" fill="#19e619"/>
<text x="642.06" y="567.6" font-size="12" fill="#111" text-anchor="middle">V</text>
<rect x="658.49" y="558" width="34.06" height="10.8" fill="#ffe67a"/>
<text x="675.72" y="567.6" font-size="12" fill="#111" text-anchor="middle">T</text>
<rect x="692.15" y="558" width="34.06" height="10.8" fill="#ffe400"/>
<text x="709.38" y="567.6" font-size="12" fill="#111" text-anchor="middle">C</text>
<rect x="725.81" y="558" width="34.06" height="10.8" fill="#ffad9f"/>
<text x="743.04" y="567.6" font-size="12" fill="#111" text-anchor="middle">S</text>
<rect x="759.47" y="558" width="34.06" height="10.8" fill="#ff1f8f"/>
<text x="776.7" y="567.6" font-size="12" fill="#111" text-anchor="middle">L</text>
<rect x="793.13" y="558" width="34.06" height="10.8" fill="#3db2ff"/>
<text x="810.36" y="567.6" font-size="12" fill="#111" text-anchor="middle">Q</text>
<rect x="826.79" y="558" width="34.06" height="10.8" fill="#3db2ff"/>
<text x="844.02" y="567.6" font-size="12" fill="#111" text-anchor="middle">Q</text>
<rect x="860.45" y="558" width="34.06" height="10.8" fill="#10c878"/>
<text x="877.68" y="567.6" font-size="12" fill="#111" text-anchor="middle">I</text>
<rect x="894.11" y="558" width="34.06" height="10.8" fill="#ff6b6e"/>
<text x="911.34" y="567.6" font-size="12" fill="#111" text-anchor="middle">D</text>
<rect x="927.77" y="558" width="12.02" height="10.8" fill="#ff12f2"/>
<path d="M784.8 131.2L936.35 131.2L939.75 134.82L936.35 138.45L939.75 142.07L936.35 145.7L784.8 145.7Q781.8 145.7 781.8 142.7L781.8 134.2Q781.8 131.2 784.8 131.2Z" fill="#000" opacity="0.13" transform="translate(0.9 1.1)"/>
<path d="M784.8 131.2L936.35 131.2L939.75 134.82L936.35 138.45L939.75 142.07L936.35 145.7L784.8 145.7Q781.8 145.7 781.8 142.7L781.8 134.2Q781.8 131.2 784.8 131.2Z" fill="url(#gr)" stroke="#c02408" stroke-width="0.9" stroke-linejoin="round"/>
<path d="M914.45 131.9h5.5L924.05 138.45L919.95 145h-5.5L918.55 138.45Z" fill="url(#cr)"/>
<path d="M923.15 131.9h5.5L932.75 138.45L928.65 145h-5.5L927.25 138.45Z" fill="url(#cr)"/>
<path d="M863.4 138V148.5" stroke="#fff" stroke-width="2.8"/><path d="M863.4 138.3V148.5" stroke="#e47a30" stroke-width="1.15"/>
<text x="863.8" y="157.9" font-size="12.9" fill="#b5460f" text-anchor="middle">rrnB T1 transcription terminator</text>
<path d="M545.6 241.2L874.6 241.2L882.9 248.45L874.6 255.7L545.6 255.7L549.4 252.07L546 248.45L549.4 244.82Z" fill="#000" opacity="0.13" transform="translate(0.9 1.1)"/>
<path d="M545.6 241.2L874.6 241.2L882.9 248.45L874.6 255.7L545.6 255.7L549.4 252.07L546 248.45L549.4 244.82Z" fill="url(#gr)" stroke="#c02408" stroke-width="0.9" stroke-linejoin="round"/>
<path d="M555.6 241.9h5.5L565.2 248.45L561.1 255h-5.5L559.7 248.45Z" fill="url(#cr)"/>
<path d="M564.6 241.9h5.5L574.2 248.45L570.1 255h-5.5L568.7 248.45Z" fill="url(#cr)"/>
<text x="708.6" y="252.8" font-size="12.9" fill="#fff" text-anchor="middle">rrnB T1 transcription terminator</text>
<path d="M717 461.2L936.35 461.2L939.75 464.77L936.35 468.35L939.75 471.93L936.35 475.5L717 475.5Q714 475.5 714 472.5L714 464.2Q714 461.2 717 461.2Z" fill="#000" opacity="0.13" transform="translate(0.9 1.1)"/>
<path d="M717 461.2L936.35 461.2L939.75 464.77L936.35 468.35L939.75 471.93L936.35 475.5L717 475.5Q714 475.5 714 472.5L714 464.2Q714 461.2 717 461.2Z" fill="url(#gg)" stroke="#505050" stroke-width="0.9" stroke-linejoin="round"/>
<path d="M914.45 461.9h5.5L924.05 468.35L919.95 474.8h-5.5L918.55 468.35Z" fill="url(#cg)"/>
<path d="M923.15 461.9h5.5L932.75 468.35L928.65 474.8h-5.5L927.25 468.35Z" fill="url(#cg)"/>
<text x="821.5" y="473" font-size="12.4" fill="#fff" text-anchor="middle" textLength="26.6" lengthAdjust="spacingAndGlyphs">attP1</text>
<path d="M545.6 571.2L936.35 571.2L939.75 574.78L936.35 578.35L939.75 581.93L936.35 585.5L545.6 585.5L549.4 581.93L546 578.35L549.4 574.78Z" fill="#000" opacity="0.13" transform="translate(0.9 1.1)"/>
<path d="M545.6 571.2L936.35 571.2L939.75 574.78L936.35 578.35L939.75 581.93L936.35 585.5L545.6 585.5L549.4 581.93L546 578.35L549.4 574.78Z" fill="url(#gg)" stroke="#505050" stroke-width="0.9" stroke-linejoin="round"/>
<path d="M914.45 571.9h5.5L924.05 578.35L919.95 584.8h-5.5L918.55 578.35Z" fill="url(#cg)"/>
<path d="M923.15 571.9h5.5L932.75 578.35L928.65 584.8h-5.5L927.25 578.35Z" fill="url(#cg)"/>
<path d="M555.6 571.9h5.5L565.2 578.35L561.1 584.8h-5.5L559.7 578.35Z" fill="url(#cg)"/>
<path d="M564.6 571.9h5.5L574.2 578.35L570.1 584.8h-5.5L568.7 578.35Z" fill="url(#cg)"/>
<text x="737.6" y="583" font-size="12.4" fill="#fff" text-anchor="middle" textLength="26.6" lengthAdjust="spacingAndGlyphs">attP1</text>
</svg>
<div class="abs" id="scroll"></div><div class="abs" id="thumb"></div>
<div class="abs" id="side"><svg style="top:38px" width="20" height="20" viewBox="0 0 20 20" fill="none" stroke="#4a4a4a" stroke-width="1.2" stroke-linecap="round" stroke-linejoin="round"><path d="M4 16.5V8.2L10 3.5L16 8.2V16.5H12.3V11.5a2.3 2.3 0 0 0-4.6 0V16.5Z"/></svg><svg style="top:68px" width="20" height="20" viewBox="0 0 20 20" fill="none" stroke="#4a4a4a" stroke-width="1.2" stroke-linecap="round" stroke-linejoin="round"><path d="M6.2 14.2H5a2 2 0 0 1-2-2V6.2a2 2 0 0 1 2-2H15a2 2 0 0 1 2 2V12.2a2 2 0 0 1-2 2H13.8"/><path d="M10 12.2L12.8 16.3H7.2Z"/></svg><svg style="top:98px" width="20" height="20" viewBox="0 0 20 20" fill="none" stroke="#4a4a4a" stroke-width="1.2" stroke-linecap="round" stroke-linejoin="round"><path d="M6 16V12.5M10 16V9M14 16V5.5" stroke-width="1.3"/></svg><svg style="top:128px" width="20" height="20" viewBox="0 0 20 20" fill="none" stroke="#4a4a4a" stroke-width="1.2" stroke-linecap="round" stroke-linejoin="round"><path d="M2.5 7.6H11.5V4.8L17.5 10L11.5 15.2V12.4H2.5Z"/></svg><svg style="top:158px" width="20" height="20" viewBox="0 0 20 20" fill="none" stroke="#4a4a4a" stroke-width="1.2" stroke-linecap="round" stroke-linejoin="round"><path d="M5.5 8.5H3V13.5H11.5V16L17 11L11.5 6V8.5H10"/><path d="M6.3 5a1.5 1.5 0 1 1 2.2 1.4c-.5.3-.7.6-.7 1.2M7.8 9.6v.2" stroke-width="1"/></svg><svg style="top:188px" width="20" height="20" viewBox="0 0 20 20" fill="none" stroke="#4a4a4a" stroke-width="1.2" stroke-linecap="round" stroke-linejoin="round"><path d="M4.8 4.2L12.8 12.2M4.8 15.6L12.8 7.6"/><circle cx="14.1" cy="6.3" r="1.8"/><circle cx="14.1" cy="13.5" r="1.8"/></svg><svg style="top:218px" width="20" height="20" viewBox="0 0 20 20" fill="none" stroke="#4a4a4a" stroke-width="1.2" stroke-linecap="round" stroke-linejoin="round"><circle cx="10" cy="10" r="2.4"/><path d="M8.6 3.2h2.8l.4 1.9 1.5.8 1.8-.7 1.5 2.3-1.4 1.3v1.8l1.4 1.3-1.5 2.3-1.8-.7-1.5.8-.4 2h-2.8l-.4-2-1.5-.8-1.8.7-1.5-2.3 1.4-1.3V9.8L3.4 8.5l1.5-2.3 1.8.7 1.5-.8Z" stroke-width="1"/></svg><svg style="top:248px" width="20" height="20" viewBox="0 0 20 20" fill="none" stroke="#4a4a4a" stroke-width="1.2" stroke-linecap="round" stroke-linejoin="round"><path d="M5.8 14.8L14.2 5.2"/><circle cx="6.2" cy="6.6" r="1.9"/><circle cx="13.8" cy="13.4" r="1.9"/></svg><div class="sp" style="top:123px"></div><div class="sp" style="top:153px"></div><div class="sp" style="top:183px"></div><div class="sp" style="top:213px"></div><div class="sp" style="top:243px"></div><div class="sp" style="top:273px"></div><svg style="top:452px" width="20" height="20" viewBox="0 0 20 20" fill="#4a4a4a" stroke="none"><circle cx="5" cy="10" r="1.3"/><circle cx="10" cy="10" r="1.3"/><circle cx="15" cy="10" r="1.3"/></svg><svg style="top:476px" width="20" height="20" viewBox="0 0 20 20" fill="none" stroke="#4a4a4a" stroke-width="1.2" stroke-linecap="round" stroke-linejoin="round"><path d="M14.5 5V15M14.5 10H5M8 7L5 10L8 13" stroke-width="1.1"/></svg></div>
</div>
</body></html>
